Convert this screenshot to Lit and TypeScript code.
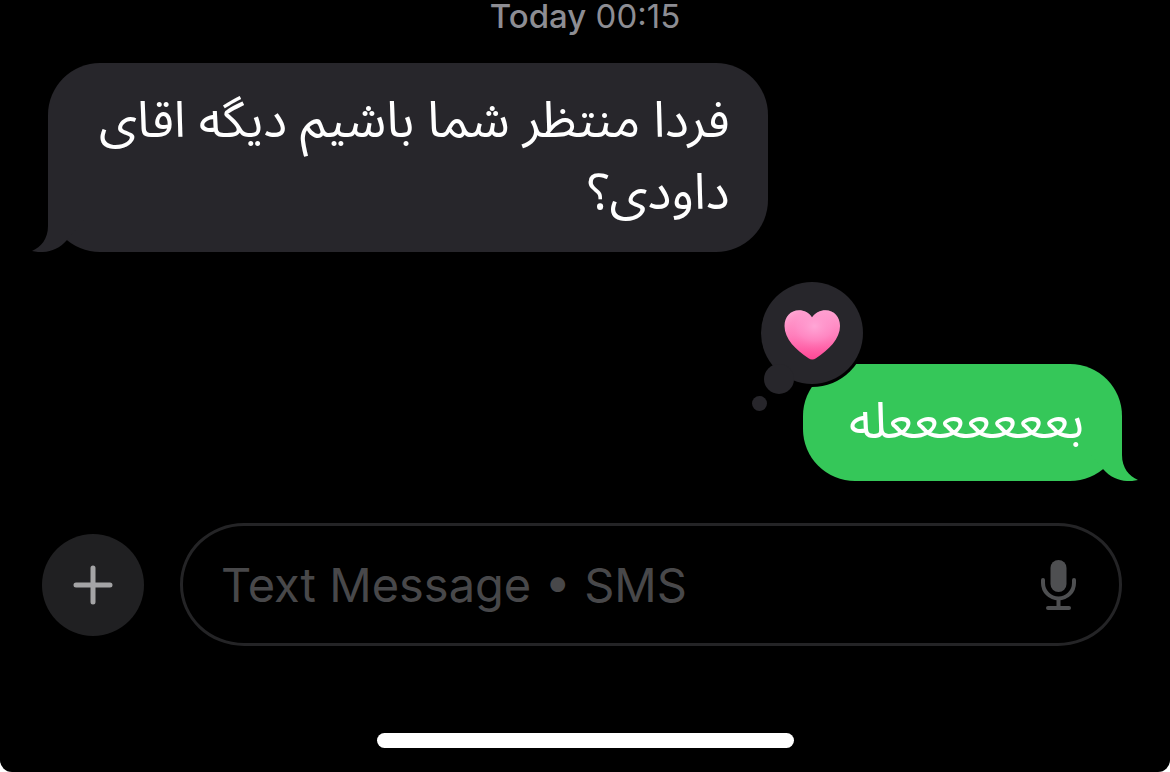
import { LitElement, html, css, svg } from "lit";
import { customElement, property } from "lit/decorators.js";

@customElement("message-bubble")
class MessageBubble extends LitElement {
  @property({ type: Boolean, reflect: true }) outgoing = false;

  static styles = css`
    :host {
      display: block;
      position: relative;
      box-sizing: border-box;
      min-width: 319px;
      max-width: 67%;
      padding: 22px 38px 23px;
      border-radius: 52px;
      background: #27262b;
      color: #fff;
      --tail: #27262b;
    }
    :host([outgoing]) {
      background: #35c759;
      --tail: #35c759;
    }
    .text {
      margin: 0;
      font-family: "Noto Sans Arabic", "DejaVu Sans", sans-serif;
      font-size: 50px;
      line-height: 72px;
    }
    .tail {
      position: absolute;
      left: -16px;
      bottom: 0;
      width: 52px;
      height: 52px;
      fill: var(--tail);
    }
    :host([outgoing]) .tail {
      left: auto;
      right: -16px;
      transform: scaleX(-1);
    }
  `;

  render() {
    return html`
      <svg class="tail" viewBox="0 0 52 52" aria-hidden="true">
        <path d="M16 0V26C16 39 9 47 0 51C4 52 8 52 11 52C20 51.500 28 48 35 40L52 20V0Z" />
      </svg>
      <p class="text" dir="rtl" lang="fa"><slot></slot></p>
      <slot name="reaction"></slot>
    `;
  }
}

@customElement("heart-reaction")
class HeartReaction extends LitElement {
  static styles = css`
    :host {
      position: absolute;
      left: -51px;
      top: -86px;
    }
    .art {
      display: block;
      width: 116px;
      height: 134px;
    }
  `;

  render() {
    return html`
      <svg class="art" viewBox="0 0 116 134" role="img" aria-label="Heart reaction">
        <defs>
          <linearGradient id="base" x1="0" y1="0" x2="0" y2="1">
            <stop offset="0" stop-color="#ffb3dc" />
            <stop offset="0.5" stop-color="#ff83bf" />
            <stop offset="1" stop-color="#ff4795" />
          </linearGradient>
          <radialGradient id="glow" cx="0.54" cy="0.32" r="0.55">
            <stop offset="0" stop-color="#ffa6d6" />
            <stop offset="0.55" stop-color="#ff8cc6" stop-opacity="0.5" />
            <stop offset="1" stop-color="#ff5ca0" stop-opacity="0" />
          </radialGradient>
        </defs>
        <circle cx="60" cy="55" r="54" fill="#000" />
        <g fill="#27262b">
          <circle cx="60" cy="55" r="51" />
          <circle cx="27" cy="101" r="15" />
          <circle cx="7.500" cy="125.500" r="7.500" />
        </g>
        ${["base", "glow"].map(
          (id) => svg`<path fill="url(#${id})"
            d="M60 39.500C57 34.500 52 32.300 47 32.300C38.500 32.300 32.500 39 32.500 48C32.500 61 44 72 56.500 80.300C59 81.900 61.500 81.900 64 80.300C76.500 72 88 61 88 48C88 39 82 32.300 73.500 32.300C68.500 32.300 63.500 34.500 60 39.500Z" />`
        )}
      </svg>
    `;
  }
}

@customElement("app-root")
class AppRoot extends LitElement {
  static styles = css`
    :host {
      display: block;
      background: #fff;
      font-family: Inter, "Liberation Sans", sans-serif;
    }
    .screen {
      display: flex;
      flex-direction: column;
      box-sizing: border-box;
      min-height: 100vh;
      padding-bottom: 24px;
      background: #000;
      border-radius: 0 0 12px 12px;
    }
    .stamp {
      margin: 0;
      text-align: center;
      font-size: 33px;
      line-height: 32px;
      color: #8d8d93;
    }
    .day {
      font-weight: 500;
    }
    .thread {
      display: flex;
      flex-direction: column;
      align-items: flex-start;
      gap: 112px;
      padding: 31px 48px 42px;
    }
    .sent {
      align-self: flex-end;
    }
    .composer {
      display: flex;
      align-items: center;
      gap: 36px;
      padding: 0 48px 0 42px;
    }
    .add {
      display: grid;
      place-items: center;
      flex: none;
      width: 102px;
      height: 102px;
      padding: 0;
      border: 0;
      border-radius: 50%;
      background: #202022;
    }
    .plus {
      width: 40px;
      height: 40px;
      stroke: #a4a4a6;
      stroke-width: 5;
      stroke-linecap: round;
    }
    .field {
      display: flex;
      align-items: center;
      flex: 1;
      min-width: 0;
      box-sizing: border-box;
      height: 123px;
      padding: 0 43px 0 38px;
      border: 3px solid #242426;
      border-radius: 64px / 61px;
    }
    .input {
      flex: 1;
      min-width: 0;
      padding: 0;
      border: 0;
      outline: 0;
      background: none;
      color: #fff;
      font-family: inherit;
      font-size: 47px;
      line-height: 62px;
    }
    .input::placeholder {
      color: #48484a;
      opacity: 1;
    }
    .dictate {
      flex: none;
      padding: 0;
      border: 0;
      background: none;
    }
    .mic {
      display: block;
      width: 35px;
      height: 50px;
      fill: none;
      stroke: #4e4f51;
      stroke-width: 4;
      stroke-linecap: round;
    }
    .capsule {
      fill: #4e4f51;
      stroke: none;
    }
    .home {
      width: 417px;
      max-width: 60%;
      height: 15px;
      margin: auto auto 0;
      border-radius: 8px;
      background: #fff;
    }
  `;

  render() {
    return html`
      <main class="screen">
        <p class="stamp"><span class="day">Today</span> <time>00:15</time></p>
        <section class="thread">
          <message-bubble>فردا منتظر شما باشیم دیگه اقای داودی؟</message-bubble>
          <message-bubble class="sent" outgoing>بعععععععله<heart-reaction slot="reaction"></heart-reaction></message-bubble>
        </section>
        <form class="composer">
          <button class="add" type="button" aria-label="Add attachment">
            <svg class="plus" viewBox="0 0 40 40"><path d="M20 3V37M3 20H37" /></svg>
          </button>
          <div class="field">
            <input class="input" type="text" aria-label="Message" placeholder="Text Message • SMS" />
            <button class="dictate" type="button" aria-label="Dictate">
              <svg class="mic" viewBox="0 0 35 50">
                <rect class="capsule" x="9.500" y="0" width="16" height="32" rx="8" />
                <path d="M2 20V23A15.500 15.500 0 0 0 33 23V20M17.500 39V47M7 48H28" />
              </svg>
            </button>
          </div>
        </form>
        <div class="home"></div>
      </main>
    `;
  }
}
